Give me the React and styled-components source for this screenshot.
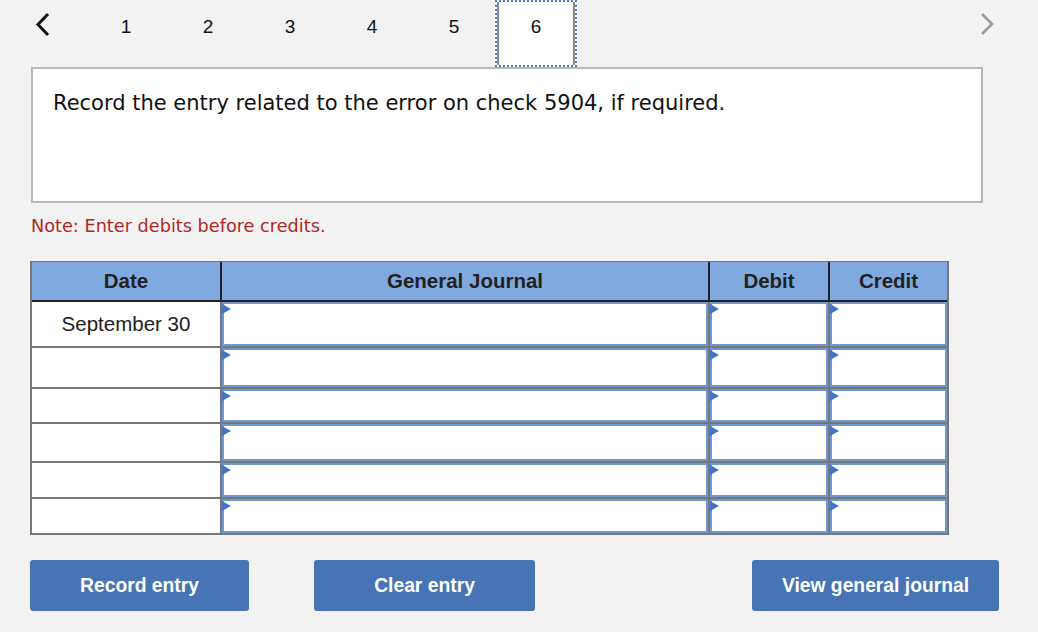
import React from 'react';
import styled, { createGlobalStyle } from 'styled-components';

const GlobalStyle = createGlobalStyle`
  html, body {
    margin: 0;
    padding: 0;
    background: #f2f2f2;
  }
`;

const Page = styled.div`
  width: 1038px;
  height: 632px;
  background: #f2f2f2;
  box-sizing: border-box;
  font-family: 'Liberation Sans', Arial, sans-serif;
`;

const Nav = styled.div`
  display: flex;
  align-items: stretch;
  height: 67px;
`;

const ArrowButton = styled.div`
  width: ${(p) => p.$width}px;
  display: flex;
  align-items: flex-start;
  justify-content: center;
  padding-top: 12px;
  padding-right: ${(p) => p.$pr || 0}px;
  box-sizing: border-box;
  cursor: pointer;
`;

const Tab = styled.div`
  width: 82px;
  height: 67px;
  box-sizing: border-box;
  display: flex;
  align-items: flex-start;
  justify-content: center;
  padding-top: 16px;
  font-size: 19px;
  color: #111;
  cursor: pointer;
  ${(p) =>
    p.$active &&
    `
    background: #fff;
    border: 2px dotted #4a7bc4;
    box-shadow: inset 2px 0 #8a8a8a, inset -2px 0 #8a8a8a;
    padding-top: 14px;
  `}
`;

const Spacer = styled.div`
  flex: 1;
`;

const Question = styled.div`
  margin-left: 31px;
  width: 952px;
  height: 136px;
  box-sizing: border-box;
  background: #fff;
  border: 2px solid #b8b8b8;
  padding: 21px 20px;
  font-family: 'DejaVu Sans', Verdana, sans-serif;
  font-size: 21px;
  line-height: 26px;
  color: #111;
`;

const Note = styled.div`
  margin: 12px 0 0 31px;
  font-family: 'DejaVu Sans', Verdana, sans-serif;
  font-size: 17.7px;
  line-height: 22px;
  color: #b0281e;
`;

const Table = styled.div`
  margin: 24px 0 0 30px;
  width: 919px;
  box-sizing: border-box;
  border: 2px solid #777;
  border-top-width: 1px;
  background: #777;
`;

const cols = '188px 486px 118px 117px';

const HeaderRow = styled.div`
  display: grid;
  grid-template-columns: ${cols};
  column-gap: 2px;
  background: #222;
  border-bottom: 2px solid #222;
`;

const HeaderCell = styled.div`
  height: 38px;
  background: #80aadf;
  display: flex;
  align-items: center;
  justify-content: center;
  font-weight: bold;
  font-size: 20.5px;
  color: #222;
`;

const Body = styled.div`
  display: grid;
  row-gap: 2px;
`;

const Row = styled.div`
  display: grid;
  grid-template-columns: ${cols};
  column-gap: 2px;
  height: ${(p) => p.$h}px;
`;

const DateCell = styled.div`
  background: #fff;
  display: flex;
  align-items: center;
  justify-content: center;
  font-size: 20.5px;
  color: #222;
`;

const InputCell = styled.div`
  position: relative;
  background: #fff;
  border: 2px solid #6f97d2;
  box-sizing: border-box;
`;

const Marker = styled.span`
  position: absolute;
  left: -2px;
  top: 0;
  width: 0;
  height: 0;
  border-left: 9px solid #4472c4;
  border-top: 5px solid transparent;
  border-bottom: 5px solid transparent;
`;

const Buttons = styled.div`
  display: flex;
  justify-content: space-between;
  margin: 25px 0 0 30px;
  width: 969px;
`;

const ButtonGroup = styled.div`
  display: flex;
  gap: 65px;
`;

const Button = styled.div`
  width: ${(p) => p.$w}px;
  height: 51px;
  background: #4674b4;
  border-radius: 3px;
  display: flex;
  align-items: center;
  justify-content: center;
  color: #fff;
  font-weight: bold;
  font-size: 19.3px;
  cursor: pointer;
`;

const rows = [
  { date: 'September 30', h: 44 },
  { date: '', h: 39 },
  { date: '', h: 33 },
  { date: '', h: 37 },
  { date: '', h: 34 },
  { date: '', h: 34 },
];

const App = () => (
  <>
    <GlobalStyle />
    <Page>
      <Nav>
        <ArrowButton $width={85}>
          <svg width="16" height="26" viewBox="0 0 16 26">
            <polyline points="13,2 3,12.5 13,23" fill="none" stroke="#111" strokeWidth="3" />
          </svg>
        </ArrowButton>
        {[1, 2, 3, 4, 5, 6].map((n) => (
          <Tab key={n} $active={n === 6}>
            {n}
          </Tab>
        ))}
        <Spacer />
        <ArrowButton $width={90} $pr={12}>
          <svg width="16" height="26" viewBox="0 0 16 26">
            <polyline points="3,2 13,12 3,22" fill="none" stroke="#999" strokeWidth="2.5" />
          </svg>
        </ArrowButton>
      </Nav>
      <Question>Record the entry related to the error on check 5904, if required.</Question>
      <Note>Note: Enter debits before credits.</Note>
      <Table>
        <HeaderRow>
          <HeaderCell>Date</HeaderCell>
          <HeaderCell>General Journal</HeaderCell>
          <HeaderCell>Debit</HeaderCell>
          <HeaderCell>Credit</HeaderCell>
        </HeaderRow>
        <Body>
          {rows.map((r, i) => (
            <Row key={i} $h={r.h}>
              <DateCell>{r.date}</DateCell>
              <InputCell><Marker /></InputCell>
              <InputCell><Marker /></InputCell>
              <InputCell><Marker /></InputCell>
            </Row>
          ))}
        </Body>
      </Table>
      <Buttons>
        <ButtonGroup>
          <Button $w={219}>Record entry</Button>
          <Button $w={221}>Clear entry</Button>
        </ButtonGroup>
        <Button $w={247}>View general journal</Button>
      </Buttons>
    </Page>
  </>
);

export default App;
